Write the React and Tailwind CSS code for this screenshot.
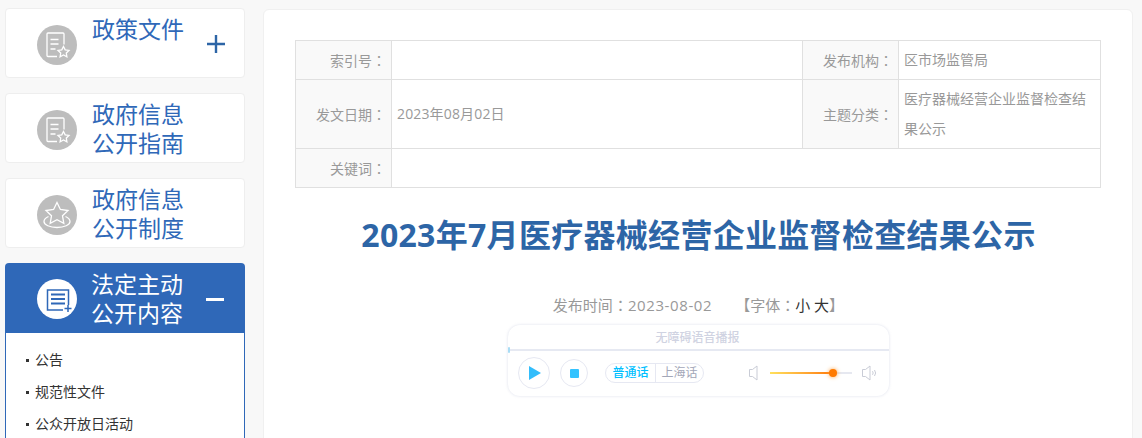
const cjk = "font-['Open_Sans','Noto_Sans_CJK_SC',sans-serif]";

const DocStarIcon = () => (
  <svg viewBox="0 0 40 40" className="w-10 h-10" fill="none" stroke="#fff" strokeWidth="1.3">
    <path d="M20 31.5h-9a1 1 0 0 1-1-1V9a1 1 0 0 1 1-1h15a1 1 0 0 1 1 1v10.5" />
    <path d="M13.5 14.5h8M13.5 19h8M13.5 24h5" />
    <path d="M26.5 21.5l1.7 3.400 3.800.5-2.700 2.600.6 3.800-3.400-1.800-3.400 1.800.6-3.800-2.700-2.600 3.800-.5z" />
  </svg>
);

const StarRingIcon = () => (
  <svg viewBox="0 0 40 40" className="w-10 h-10" fill="none" stroke="#fff" strokeWidth="1.3">
    <path d="M20 7.5l3.400 7 7.600 1-5.500 5.300 1.300 7.600-6.800-3.600-6.800 3.600 1.300-7.600L9 15.500l7.600-1z" />
    <path d="M11.500 21.500c-2.700 1.200-4.500 3-4.500 5 0 3.300 5.800 6 13 6s13-2.700 13-6c0-2-1.800-3.800-4.500-5" />
  </svg>
);

const ListPlusIcon = () => (
  <svg viewBox="0 0 40 40" className="w-10 h-10" fill="none" stroke="#2f68b8" strokeWidth="1.5">
    <path d="M26 31H10.500V11h21v15" />
    <path d="M14 15.500h14M14 20h14M14 24.500h14" strokeWidth="2" />
    <path d="M31 26v7M27.500 29.500h7" />
  </svg>
);

const SpeakerIcon = ({ waves }) => (
  <svg viewBox="0 0 16 16" className="w-4 h-4" fill="none" stroke="#c9ccd6" strokeWidth="1">
    <path d="M9 1v14L4.500 11.500H1.500v-7h3z" />
    {waves && <path d="M11.500 6.200a3 3 0 0 1 0 3.600M13.500 5a5 5 0 0 1 0 6" />}
  </svg>
);

const Colon = () => <span className="font-['Noto_Sans_CJK_TC',sans-serif]">：</span>;

const menus = [
  { title: ["政策文件"], icon: <DocStarIcon />, mark: "plus" },
  { title: ["政府信息", "公开指南"], icon: <DocStarIcon /> },
  { title: ["政府信息", "公开制度"], icon: <StarRingIcon /> },
];

const links = ["公告", "规范性文件", "公众开放日活动"];

function MenuCard({ title, icon, mark }) {
  return (
    <div className="h-[70px] shrink-0 bg-white border border-[#eeeeee] rounded-sm flex pl-[31px] pt-[16px]">
      <div className="w-10 h-10 rounded-full bg-[#bdbdbd] shrink-0">{icon}</div>
      <div className="ml-[15px] w-[115px] -mt-[10px] text-[23px] leading-[29px] text-[#2f68b8]">
        {title.map((t) => (
          <div key={t}>{t}</div>
        ))}
      </div>
      {mark === "plus" && (
        <svg viewBox="0 0 18 18" className="w-[18px] h-[18px] mt-[10px]" stroke="#2d65a6" strokeWidth="2.4">
          <path d="M0 9h18M9 0v18" />
        </svg>
      )}
    </div>
  );
}

const labelCell = "bg-[#f9f9f9] border border-[#e0e0e0] text-right pr-[5px] text-[#999999] font-normal";
const valueCell = "border border-[#e0e0e0] pl-[5px] pr-1 text-[#999999] text-left";

export default function App() {
  return (
    <div className={`${cjk} h-[438px] overflow-hidden bg-[#f8f8f8] flex pl-[5px] pt-2`}>
      {/* left menu */}
      <div className="w-[240px] shrink-0 flex flex-col gap-[15px]">
        {menus.map((m, i) => (
          <MenuCard key={i} {...m} />
        ))}
        <div className="shrink-0">
          <div className="h-[70px] bg-[#2f68b8] rounded-t-sm flex pl-[32px] pt-[16px]">
            <div className="w-10 h-10 rounded-full bg-white shrink-0">
              <ListPlusIcon />
            </div>
            <div className="ml-[14px] w-[115px] -mt-[9px] text-[23px] leading-[29px] text-white">
              <div>法定主动</div>
              <div>公开内容</div>
            </div>
            <div className="w-[18px] h-[3px] bg-white mt-[19px]" />
          </div>
          <ul className="border border-t-0 border-[#2f68b8] bg-white pl-5 pt-[11px] pb-4 text-sm leading-[32px] text-[#333333]">
            {links.map((l) => (
              <li key={l} className="flex items-center">
                <span className="w-[3px] h-[3px] bg-[#333333] mr-[6px]" />
                {l}
              </li>
            ))}
          </ul>
        </div>
      </div>

      {/* article */}
      <div className="ml-[18px] w-[870px] h-[460px] shrink-0 mt-px bg-white border border-[#f0f0f0] rounded-md pl-[31px] pr-[32px] pt-[30px]">
        <table className="w-[805px] table-fixed border-collapse border border-[#e0e0e0] text-sm">
          <colgroup>
            <col className="w-[96px]" />
            <col className="w-[411px]" />
            <col className="w-[96px]" />
            <col className="w-[202px]" />
          </colgroup>
          <tbody>
            <tr className="h-[39px]">
              <th className={labelCell}>索引号<Colon /></th>
              <td className={valueCell}></td>
              <th className={labelCell}>发布机构<Colon /></th>
              <td className={valueCell}>区市场监管局</td>
            </tr>
            <tr className="h-[69px]">
              <th className={labelCell}>发文日期<Colon /></th>
              <td className={`${valueCell} tracking-[0.15px]`}>2023年08月02日</td>
              <th className={labelCell}>主题分类<Colon /></th>
              <td className={`${valueCell} leading-[30px]`}>医疗器械经营企业监督检查结果公示</td>
            </tr>
            <tr className="h-[39px]">
              <th className={labelCell}>关键词<Colon /></th>
              <td className={valueCell} colSpan={3}></td>
            </tr>
          </tbody>
        </table>

        <div className="pl-[2px]">
          <h1 className="mt-[24px] text-center text-[32px] tracking-[0.3px] leading-[46px] font-bold text-[#2d65a6] whitespace-nowrap">
            2023年7月医疗器械经营企业监督检查结果公示
          </h1>

          <div className="mt-[35px] text-center text-[15px] leading-[24px] text-[#999999]">
            发布时间<Colon /><span className="tracking-[0.6px]">2023-08-02</span>
            <span className="ml-[23px]">【字体<Colon /></span>
            <span className="text-[#333333]">小 大</span>】
          </div>

          {/* voice player */}
          <div className="mt-[8px] mx-auto w-[381px] h-[71px] bg-white rounded-xl shadow-[0_0_3px_rgba(170,178,205,0.4)]">
            <div className="h-[24px] pr-[2px] text-center text-xs leading-[26px] font-medium text-[#d0d3e2]">无障碍语音播报</div>
            <div className="relative h-[2px] bg-[#e6e9f2]">
              <span className="absolute left-0 -top-[2px] w-[2px] h-[6px] rounded-full bg-[#a8dcf5]" />
            </div>
            <div className="flex items-center pl-[10px] h-[44px]">
              <div className="w-[32px] h-[32px] rounded-full border border-[#e6e8f2] flex items-center justify-center">
                <svg viewBox="0 0 12 14" className="w-[12px] h-[14px] ml-[2px]">
                  <path d="M0 0l12 7-12 7z" fill="#33bdfb" />
                </svg>
              </div>
              <div className="ml-[10px] w-[28px] h-[28px] rounded-full border border-[#e6e8f2] flex items-center justify-center">
                <span className="w-[9px] h-[9px] rounded-[1px] bg-[#33c3ff]" />
              </div>
              <div className="ml-[17px] h-[20px] w-[99px] flex rounded-full border border-[#e6e8f2] text-xs leading-[18px]">
                <span className="w-[49px] text-center font-medium text-[#00bfff]">普通话</span>
                <span className="flex-1 text-center border-l border-[#e6e8f2] text-[#a3a7b8]">上海话</span>
              </div>
              <div className="ml-[44px] flex items-center">
                <SpeakerIcon />
                <div className="ml-[6px] w-[82px] h-[2px] bg-[#e6e8f0] relative">
                  <div className="h-full w-[62px] bg-gradient-to-r from-[#ffe05c] to-[#ff7a00]" />
                  <span className="absolute left-[59px] -top-[3px] w-2 h-2 rounded-full bg-[#ff7a00] shadow-[0_0_4px_#ffa040]" />
                </div>
                <div className="ml-[9px]">
                  <SpeakerIcon waves />
                </div>
              </div>
            </div>
          </div>
        </div>
      </div>
    </div>
  );
}
